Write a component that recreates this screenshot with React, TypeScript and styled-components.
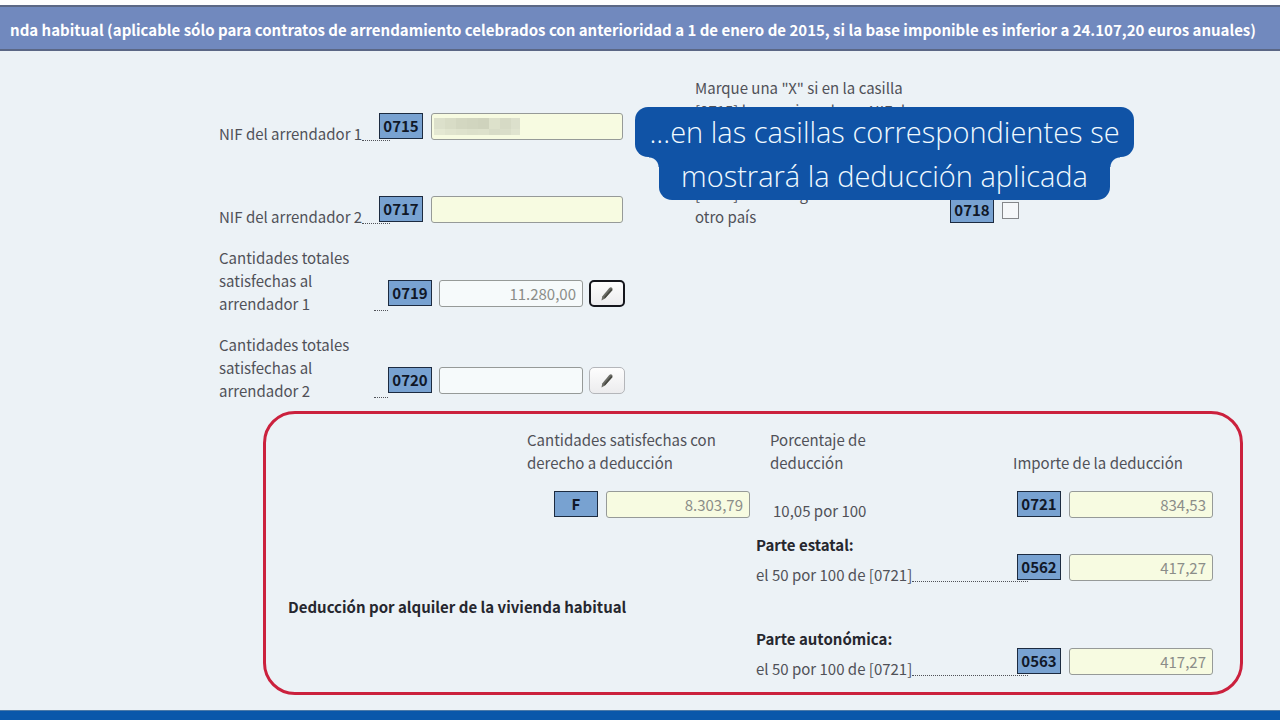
import React from "react";
import styled, { createGlobalStyle } from "styled-components";

const GlobalStyle = createGlobalStyle`
  *, *::before, *::after { box-sizing: border-box; }
  body {
    margin: 0;
    background: #ecf2f6;
    color: #505158;
    font-family: "Noto Sans CJK SC", "Liberation Sans", sans-serif;
    font-size: 15px;
    line-height: 23px;
  }
`;

const Page = styled.div`
  position: relative;
  display: flex;
  flex-direction: column;
  min-height: 100vh;
  overflow: hidden;
`;

const TopStrip = styled.div`
  height: 5px;
  background: #fdfdfe;
`;

const Banner = styled.h1`
  margin: 0;
  padding: 12px 14px 9px 0;
  border-top: 2px solid #5b6785;
  border-bottom: 2px solid #5b6785;
  background: #7189be;
  color: #fff;
  font-size: 15px;
  line-height: 21px;
  font-weight: 700;
  text-align: center;
  white-space: nowrap;
`;

const Form = styled.form`
  flex: 1;
  display: flex;
  flex-direction: column;
`;

const UpperFields = styled.div`
  display: flex;
  gap: 70px;
  padding: 25px 24px 9px 219px;
`;

const FieldColumn = styled.div<{ $width: number }>`
  display: flex;
  flex-direction: column;
  gap: 18px;
  width: ${(p) => p.$width}px;
`;

const RowPair = styled.div`
  display: flex;
  flex-direction: column;
  gap: 14px;
`;

const FieldRow = styled.div<{ $tall?: boolean }>`
  display: flex;
  align-items: flex-end;
  min-height: ${(p) => (p.$tall ? 69 : 0)}px;
`;

const NifLine = styled.div`
  padding-right: 2px;
`;

const FieldLabel = styled.label<{ $width?: number }>`
  flex: none;
  width: ${(p) => (p.$width ? `${p.$width}px` : "auto")};
`;

const Leader = styled.span<{ $under?: boolean }>`
  flex: 1;
  margin-right: ${(p) => (p.$under ? -11 : 0)}px;
  margin-bottom: 4px;
  border-bottom: 1px dotted #505258;
`;

const Controls = styled.div<{ $lift?: number; $tight?: boolean }>`
  position: relative;
  flex: none;
  display: flex;
  align-items: flex-start;
  gap: ${(p) => (p.$tight ? 7 : 8)}px;
  margin-bottom: ${(p) => p.$lift ?? 5}px;
`;

const Code = styled.span`
  display: block;
  width: 44px;
  height: 26px;
  border: 1px solid #1c2b40;
  background: #78a2d1;
  color: #101828;
  font-weight: 700;
  line-height: 24px;
  text-align: center;
`;

const TextField = styled.input<{ $wide?: boolean; $editable?: boolean }>`
  display: block;
  width: ${(p) => (p.$wide ? 192 : 144)}px;
  height: 27px;
  padding: 0 6px;
  border: 1px solid #969a98;
  border-radius: 3px;
  background: ${(p) => (p.$editable ? "#f6fafb" : "#f7fbe1")};
  color: #8b8d89;
  font: inherit;
  text-align: right;
  outline: none;
`;

const EditButton = styled.button<{ $active?: boolean }>`
  display: flex;
  align-items: center;
  justify-content: center;
  width: 36px;
  height: 27px;
  margin-left: -1px;
  padding: 0;
  border: ${(p) => (p.$active ? "2px solid #15161c" : "1px solid #b4b6ba")};
  border-radius: 5px;
  background: linear-gradient(#fdfdfd, #ececee);
`;

const Tick = styled.input`
  appearance: none;
  width: 17px;
  height: 17px;
  margin: 5px 0 0;
  border: 1px solid #85878a;
  background: #f6f8fa;
`;

const Redaction = styled.svg`
  position: absolute;
  left: 55px;
  top: 5px;
`;

const ResultPanel = styled.section`
  margin: 0 37px 14px 263px;
  padding: 14px 27px 12px 22px;
  border: 3px solid #cb213d;
  border-radius: 32px;
`;

const ResultGrid = styled.div`
  display: grid;
  grid-template-columns: 243px 243px 200px;
  justify-content: end;
  align-items: end;
  row-gap: 17px;
  margin-bottom: 15px;
`;

const ResultCell = styled.div`
  display: flex;
  justify-content: flex-end;
  padding-right: 20px;
`;

const AmountCell = styled.div`
  display: flex;
  justify-content: flex-end;
`;

const Percentage = styled.span`
  padding-left: 3px;
  line-height: 15px;
`;

const Breakdown = styled.div`
  display: flex;
  justify-content: space-between;
  align-items: center;
`;

const Strong = styled.h2`
  margin: 0;
  color: #26272e;
  font-size: 15px;
  line-height: 23px;
  font-weight: 700;
`;

const Parts = styled.div`
  display: flex;
  flex-direction: column;
  gap: 41px;
  width: 457px;
`;

const PartText = styled.div`
  flex: 1;
  display: flex;
  flex-direction: column;
  gap: 7px;
`;

const BottomBar = styled.footer`
  height: 10px;
  border-top: 1px solid #4d7aa8;
  background: #0a57aa;
`;

const Caption = styled.div`
  position: absolute;
  left: 635px;
  top: 107px;
  display: flex;
  flex-direction: column;
  align-items: center;
  color: #f0faff;
  font-family: "Open Sans", "Noto Sans", sans-serif;
  font-size: 29px;
  font-weight: 300;
  white-space: nowrap;
`;

const CaptionTop = styled.div`
  width: 499px;
  height: 50px;
  border-radius: 13px;
  background: #1053a6;
  line-height: 50px;
  text-align: center;
`;

const CaptionBottom = styled.div`
  position: relative;
  width: 451px;
  height: 43px;
  border-radius: 0 0 13px 13px;
  background: #1053a6;
  line-height: 37px;
  text-align: center;

  &::before,
  &::after {
    content: "";
    position: absolute;
    top: 0;
    width: 10px;
    height: 10px;
  }
  &::before {
    left: -10px;
    background: radial-gradient(circle at 0 100%, transparent 9px, #1053a6 10px);
  }
  &::after {
    right: -10px;
    background: radial-gradient(circle at 100% 100%, transparent 9px, #1053a6 10px);
  }
`;

const Pencil = () => (
  <svg width="16" height="18" viewBox="0 0 16 18" aria-hidden="true">
    <path d="M2.500 15.500 L3.200 11.500 L10.300 3 Q11.800 1.800 13 2.800 Q14.200 4 13.200 5.400 L6 13.600 Z" fill="#6b6c66" />
    <path d="M5.600 12.800 L12.800 4.600" stroke="#45463f" strokeWidth="1.500" />
  </svg>
);

const mosaicTop = ["#dce0cb", "#d8dcc6", "#d3d7c1", "#d1d5bf", "#cfd3bd", "#dde1cb", "#d6dac5", "#dce0cc"];
const mosaicBottom = ["#e4e8d2", "#e0e4ce", "#dee2cc", "#dce0ca", "#dde1cb", "#d8dcc7", "#dadec9", "#e0e4cf"];

const NifRow = ({ n, code, hidden }: { n: number; code: string; hidden?: boolean }) => (
  <FieldRow $tall>
    <FieldLabel htmlFor={`c${code}`}>{`NIF del arrendador ${n}`}</FieldLabel>
    <Leader $under />
    <Controls>
      <Code>{code}</Code>
      <TextField id={`c${code}`} $wide readOnly />
      {hidden && (
        <Redaction width="86" height="17" aria-hidden="true">
          {mosaicTop.map((c, i) => (
            <rect key={i} x={i * 11} y="0" width="11" height="11" fill={c} />
          ))}
          {mosaicBottom.map((c, i) => (
            <rect key={i} x={i * 11} y="11" width="11" height="6" fill={c} />
          ))}
        </Redaction>
      )}
    </Controls>
  </FieldRow>
);

const AmountRow = ({ n, code, value, active }: { n: number; code: string; value: string; active?: boolean }) => (
  <FieldRow $tall>
    <FieldLabel htmlFor={`c${code}`} $width={155}>
      Cantidades totales
      <br />
      satisfechas al
      <br />
      {`arrendador ${n}`}
    </FieldLabel>
    <Leader />
    <Controls $lift={8} $tight>
      <Code>{code}</Code>
      <TextField id={`c${code}`} $editable defaultValue={value} />
      <EditButton type="button" $active={active} aria-label={`Editar casilla ${code}`}>
        <Pencil />
      </EditButton>
    </Controls>
  </FieldRow>
);

const CountryRow = ({ nif, code }: { nif: string; code: string }) => (
  <FieldRow $tall>
    <FieldLabel htmlFor={`c${code}`} $width={255}>
      Marque una "X" si en la casilla
      <br />
      {`[${nif}] ha consignado un NIF de`}
      <br />
      otro país
    </FieldLabel>
    <Controls>
      <Code>{code}</Code>
      <Tick id={`c${code}`} type="checkbox" />
    </Controls>
  </FieldRow>
);

const PartRow = ({ title, code, value }: { title: string; code: string; value: string }) => (
  <FieldRow>
    <PartText>
      <Strong>{title}</Strong>
      <FieldRow>
        <FieldLabel htmlFor={`c${code}`}>el 50 por 100 de [0721]</FieldLabel>
        <Leader $under />
      </FieldRow>
    </PartText>
    <Controls>
      <Code>{code}</Code>
      <TextField id={`c${code}`} readOnly value={value} />
    </Controls>
  </FieldRow>
);

export default function App() {
  return (
    <Page>
      <GlobalStyle />
      <TopStrip />
      <Banner>
        nda habitual (aplicable sólo para contratos de arrendamiento celebrados con anterioridad a 1 de enero de
        2015, si la base imponible es inferior a 24.107,20 euros anuales)
      </Banner>
      <Form>
        <UpperFields>
          <FieldColumn $width={406}>
            <RowPair>
              <NifLine>
                <NifRow n={1} code="0715" hidden />
              </NifLine>
              <NifLine>
                <NifRow n={2} code="0717" />
              </NifLine>
            </RowPair>
            <AmountRow n={1} code="0719" value="11.280,00" active />
            <AmountRow n={2} code="0720" value="" />
          </FieldColumn>
          <FieldColumn $width={330}>
            <RowPair>
              <CountryRow nif="0715" code="0716" />
              <CountryRow nif="0717" code="0718" />
            </RowPair>
          </FieldColumn>
        </UpperFields>
        <ResultPanel>
          <ResultGrid>
            <label htmlFor="cF">
              Cantidades satisfechas con
              <br />
              derecho a deducción
            </label>
            <span>
              Porcentaje de
              <br />
              deducción
            </span>
            <label htmlFor="c0721">Importe de la deducción</label>
            <ResultCell>
              <Controls $lift={0}>
                <Code>F</Code>
                <TextField id="cF" readOnly value="8.303,79" />
              </Controls>
            </ResultCell>
            <Percentage>10,05 por 100</Percentage>
            <AmountCell>
              <Controls $lift={0}>
                <Code>0721</Code>
                <TextField id="c0721" readOnly value="834,53" />
              </Controls>
            </AmountCell>
          </ResultGrid>
          <Breakdown>
            <Strong>Deducción por alquiler de la vivienda habitual</Strong>
            <Parts>
              <PartRow title="Parte estatal:" code="0562" value="417,27" />
              <PartRow title="Parte autonómica:" code="0563" value="417,27" />
            </Parts>
          </Breakdown>
        </ResultPanel>
      </Form>
      <BottomBar />
      <Caption>
        <CaptionTop>...en las casillas correspondientes se</CaptionTop>
        <CaptionBottom>mostrará la deducción aplicada</CaptionBottom>
      </Caption>
    </Page>
  );
}
